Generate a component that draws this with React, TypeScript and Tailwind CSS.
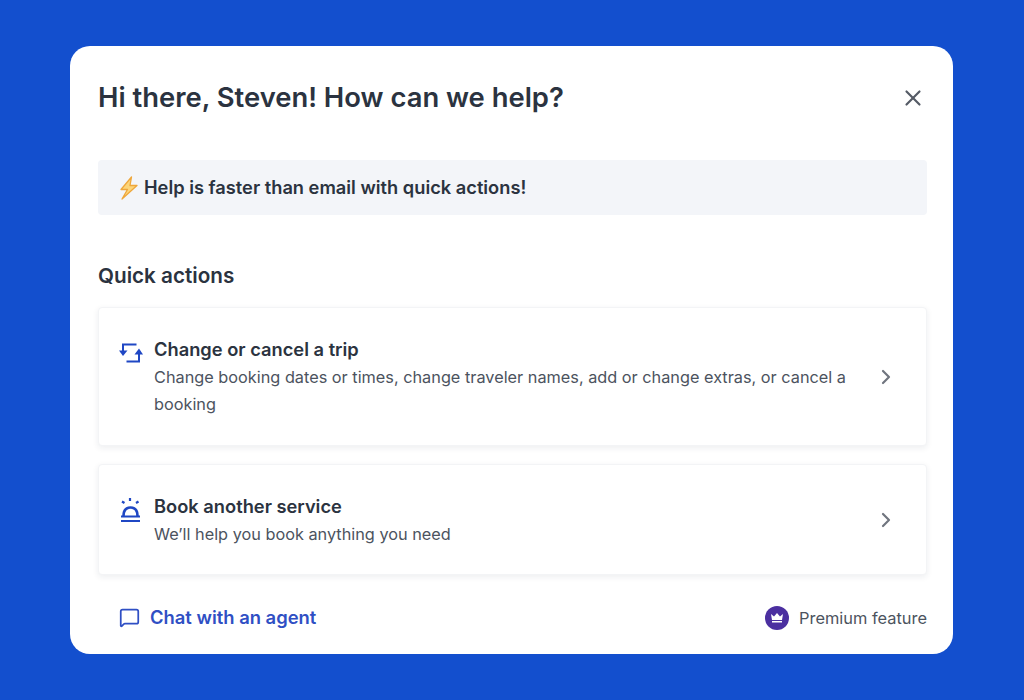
import { ChevronRight, MessageSquare, X } from "lucide-react";

const SwapIcon = () => (
  <svg width="26" height="22" viewBox="0 0 26 22" fill="none" stroke="#1f47c4" strokeWidth="2">
    <path d="M5 9V2.500h13.500" />
    <path d="M1 8.500h8.500L5 14z" stroke="none" fill="#1f47c4" />
    <path d="M21 12v7.500H8.500" />
    <path d="M16.500 12.500H25L21 6.500z" stroke="none" fill="#1f47c4" />
  </svg>
);

const BellIcon = () => (
  <svg width="24" height="26" viewBox="0 0 24 26" fill="none" stroke="#1f47c4" strokeWidth="2.200">
    <path d="M12 1v3M4 4.500l2.500 1.500M20.500 4.500L18 6" />
    <path d="M5.500 19c0-5.500 2.500-8.500 7-8.500s7 3 7 8.500" strokeWidth="2.600" />
    <path d="M3 19.500h19M3 24h19" />
  </svg>
);

const Bolt = () => (
  <svg width="20" height="24" viewBox="0 0 20 24">
    <path d="M12.500 1L2 13.500h6.500L3 23 18 9.500h-7z" fill="#fcd57a" stroke="#eea73c" strokeWidth="1.300" strokeLinejoin="round" />
  </svg>
);

const Crown = () => (
  <span className="flex h-6 w-6 items-center justify-center rounded-full bg-[#4b2fa0]">
    <svg width="14" height="12" viewBox="0 0 14 12" fill="#ffffff">
      <path d="M1 2l3 2.500L7 1l3 3.500L13 2l-1 6H2z" />
      <rect x="2" y="9" width="10" height="1.500" />
    </svg>
  </span>
);

type Action = {
  title: string;
  text: string;
  icon: React.ReactNode;
  box: string;
  iconBox: string;
};

const actions: Action[] = [
  {
    title: "Change or cancel a trip",
    text: "Change booking dates or times, change traveler names, add or change extras, or cancel a booking",
    icon: <SwapIcon />,
    box: "h-[139px]",
    iconBox: "pt-[34px]",
  },
  {
    title: "Book another service",
    text: "We’ll help you book anything you need",
    icon: <BellIcon />,
    box: "h-[111px]",
    iconBox: "pt-[32px]",
  },
];

export default function App() {
  return (
    <div
      className="h-[700px] w-[1024px] bg-[#134fce] pt-[46px] pl-[70px] text-[#2b3340]"
      style={{ fontFamily: "Inter, 'Noto Sans', sans-serif" }}
    >
      <div className="h-[608px] w-[883px] rounded-[20px] bg-white pr-[26px] pl-7">
        <div className="flex h-[104px] items-center justify-between">
          <h1 className="text-[27.400px] font-semibold">Hi there, Steven! How can we help?</h1>
          <X className="mr-px text-[#555b66]" size={26} strokeWidth={2} />
        </div>

        <div className="mt-[10px] flex h-[55px] items-center gap-[5px] rounded bg-[#f3f5f9] pr-5 pl-[21px] text-[18.250px] font-semibold">
          <Bolt />
          <span>Help is faster than email with quick actions!</span>
        </div>

        <h2 className="mt-[47px] text-[20.700px] leading-7 font-semibold">Quick actions</h2>

        <div className="mt-[17px] flex flex-col gap-[18px]">
          {actions.map((a) => (
            <div
              key={a.title}
              className={`flex ${a.box} items-center rounded border border-[#f3f4f6] bg-white pr-[28px] pl-[19px] shadow-[0_2px_6px_rgba(30,40,60,0.08)]`}
            >
              <div className={`w-[36px] shrink-0 self-start ${a.iconBox}`}>{a.icon}</div>
              <div className="flex-1 self-start pt-[29px]">
                <div className="text-[18.300px] leading-6 font-semibold">{a.title}</div>
                <div className="mt-[3px] pr-7 text-[16.300px] leading-[27px] text-[#4c535e]">{a.text}</div>
              </div>
              <ChevronRight className="text-[#70757f]" size={24} strokeWidth={2.200} />
            </div>
          ))}
        </div>

        <div className="flex h-[79px] items-center justify-between pt-[6px] pl-[21px]">
          <div className="flex items-center gap-[10px] text-[18.400px] font-semibold text-[#2f4fc4]">
            <MessageSquare size={21} strokeWidth={2} />
            <span>Chat with an agent</span>
          </div>
          <div className="flex items-center gap-[10px] pt-px text-[16.400px] text-[#4c535e]">
            <Crown />
            <span>Premium feature</span>
          </div>
        </div>
      </div>
    </div>
  );
}
